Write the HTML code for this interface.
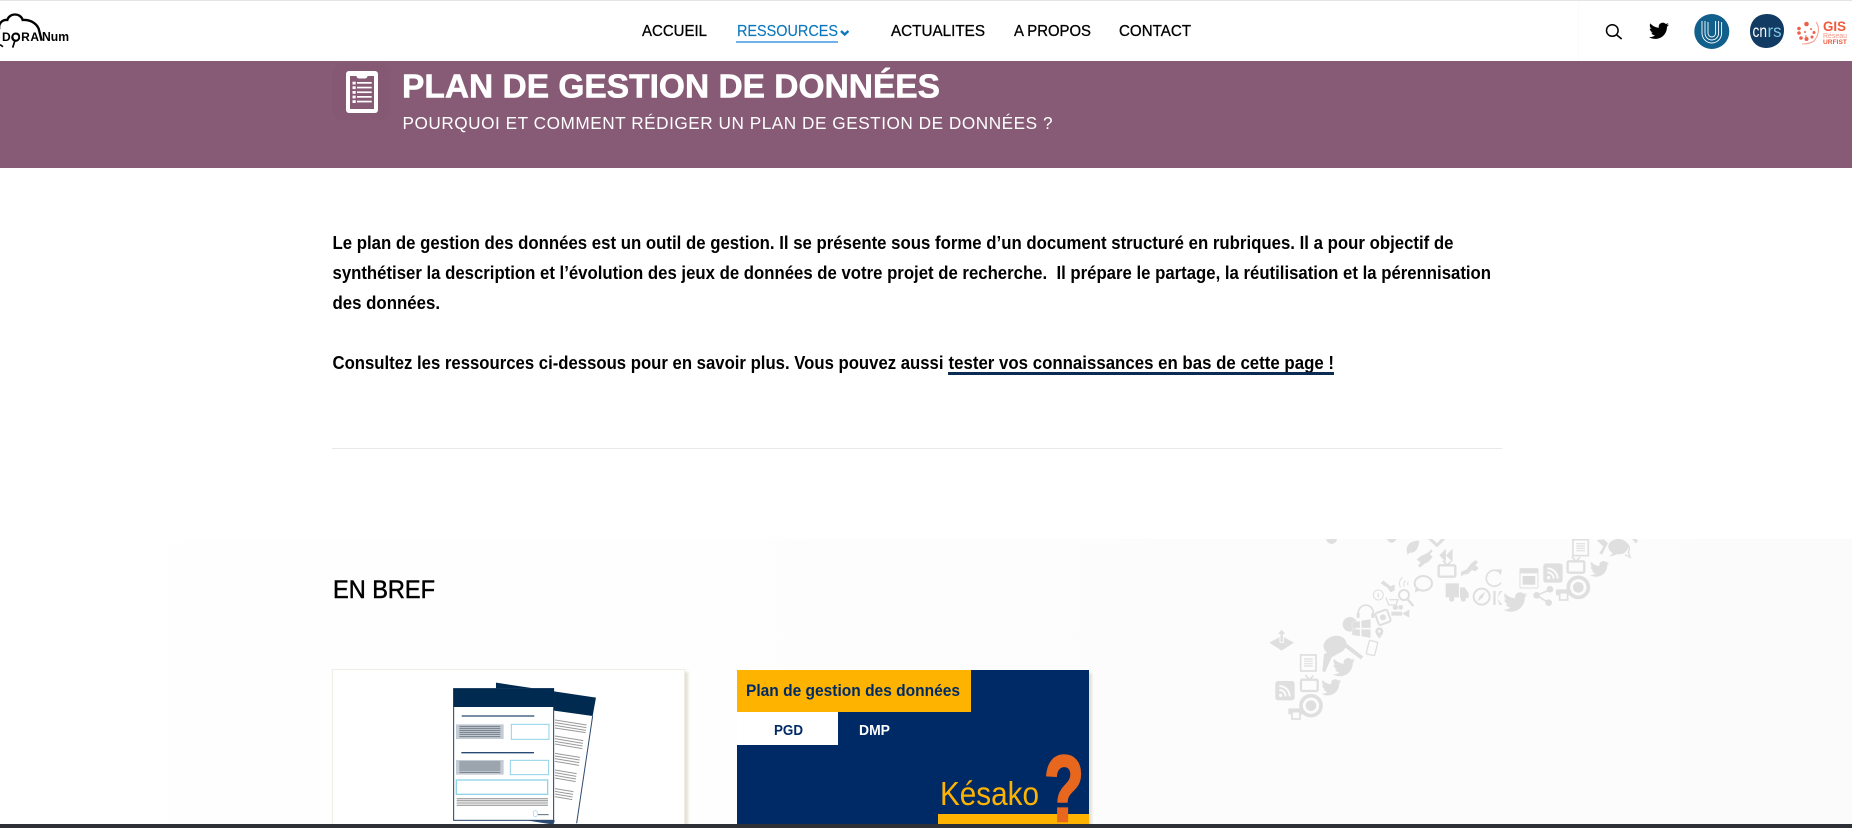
<!DOCTYPE html>
<html lang="fr"><head><meta charset="utf-8"><title>Plan de gestion de données</title>
<style>html,body{margin:0;padding:0;background:#fff;width:1852px;height:828px;overflow:hidden}svg{display:block}text{font-family:"Liberation Sans",sans-serif}</style></head>
<body>
<svg width="1852" height="828" viewBox="0 0 1852 828" xmlns="http://www.w3.org/2000/svg">
<defs>
<linearGradient id="bg" x1="0" y1="0" x2="1" y2="0"><stop offset="0" stop-color="#fff"/><stop offset=".25" stop-color="#fefefe"/><stop offset=".75" stop-color="#fcfcfc"/><stop offset="1" stop-color="#fbfbfb"/></linearGradient>
<filter id="sh" x="-5%" y="-5%" width="110%" height="110%"><feGaussianBlur stdDeviation="1.300"/></filter>
<path id="tw" d="M23.95 4.57a10 10 0 01-2.82.77 4.96 4.96 0 002.16-2.72c-.95.55-1.96.95-3.06 1.18a4.92 4.92 0 00-8.38 4.48C7.69 8.1 4.07 6.13 1.64 3.16a4.82 4.82 0 00-.66 2.47c0 1.71.87 3.21 2.19 4.1a4.9 4.9 0 01-2.23-.61v.06c0 2.39 1.7 4.38 3.95 4.83a5 5 0 01-2.21.08 4.94 4.94 0 004.6 3.42A9.87 9.87 0 010 19.54a13.94 13.94 0 007.55 2.21c9.05 0 14-7.5 14-13.98 0-.21 0-.42-.02-.63a9.94 9.94 0 002.46-2.55z"/>
<g id="rss"><rect width="58" height="58" rx="8" fill="#dfdfdf"/><circle cx="16" cy="43" r="5" fill="#fbfbfb"/><path d="M12 27a19 19 0 0 1 19 19M12 15a31 31 0 0 1 31 31" fill="none" stroke="#fbfbfb" stroke-width="6"/></g>
<g id="tv"><rect x="3" y="14" width="50" height="34" rx="4" fill="none" stroke="#dfdfdf" stroke-width="7"/><path d="M16 0l12 14L40 2" fill="none" stroke="#dfdfdf" stroke-width="5"/></g>
<g id="target"><circle r="30" fill="none" stroke="#dfdfdf" stroke-width="11"/><circle r="16" fill="#dfdfdf"/></g>
<g id="doc"><rect x="2" y="2" width="46" height="48" fill="none" stroke="#dfdfdf" stroke-width="5"/><path d="M12 14h26M12 21h26M12 28h26M12 35h26" stroke="#dfdfdf" stroke-width="3.500"/></g>
<g id="printer"><rect x="0" y="10" width="45" height="18" rx="3" fill="#dfdfdf"/><rect x="11" y="20" width="24" height="22" fill="#fbfbfb" stroke="#dfdfdf" stroke-width="5"/></g>
<clipPath id="secclip"><rect x="0" y="27" width="1260" height="600"/></clipPath>
</defs>

<!-- top rule and header -->
<rect width="1852" height="828" fill="#fff"/>
<rect width="1852" height="1" fill="#e4e4e4"/>
<rect x="1578" y="1" width="1" height="60" fill="#fbfbfb"/>

<!-- logo -->
<g transform="scale(.3333)">
<path d="M-2 88C-6 72 6 58 22 60C28 38 62 38 68 60C88 58 108 68 116 86L125 122" fill="none" stroke="#000" stroke-width="7"/>
<circle cx="47" cy="112" r="11" fill="#fff" stroke="#000" stroke-width="5"/>
<path d="M44 124L38 143M0 134L9 140" fill="none" stroke="#000" stroke-width="5"/>
</g>
<text x="2" y="41" font-size="12" font-weight="bold" fill="#000" textLength="37" lengthAdjust="spacing">DORA</text>
<text x="42" y="41" font-size="12.500" font-weight="bold" fill="#000" textLength="27" lengthAdjust="spacingAndGlyphs">Num</text>

<!-- nav -->
<g font-size="15.800" fill="#000" stroke="#000" stroke-width=".3">
<text x="642" y="36" textLength="65" lengthAdjust="spacingAndGlyphs">ACCUEIL</text>
<text x="891" y="36" textLength="94" lengthAdjust="spacingAndGlyphs">ACTUALITES</text>
<text x="1014" y="36" textLength="77" lengthAdjust="spacingAndGlyphs">A PROPOS</text>
<text x="1119" y="36" textLength="72" lengthAdjust="spacingAndGlyphs">CONTACT</text>
</g>
<text x="737" y="36" font-size="15.800" fill="#0b76bd" stroke="#0b76bd" stroke-width=".15" textLength="101" lengthAdjust="spacingAndGlyphs">RESSOURCES</text>
<rect x="736" y="41" width="102" height="2" fill="#6fb1ec"/>
<path d="M841 31l3.700 3.500L848.400 31" fill="none" stroke="#0b76bd" stroke-width="2.400"/>

<!-- right icons -->
<circle cx="1612.300" cy="30.500" r="5.800" fill="none" stroke="#000" stroke-width="1.500"/>
<path d="M1616.500 34.800L1621.700 39" stroke="#000" stroke-width="1.600"/>
<use href="#tw" transform="translate(1649 20.800) scale(.833)" fill="#000"/>
<circle cx="1711.800" cy="31.500" r="17.500" fill="#115f8b"/>
<g fill="none" stroke="#fff" stroke-width=".9">
<path d="M1702 21v12a9.800 10 0 0 0 19.600 0V22"/>
<path d="M1705 21v12a6.800 7 0 0 0 13.600 0V21"/>
<path d="M1708 22v11a3.800 4 0 0 0 7.600 0V21"/>
</g>
<path d="M1767 14c10 0 17 7 17 16 0 11-8 18-18 18-9 0-16-7-16-17 0-10 7-17 17-17z" fill="#113b62"/>
<text x="1752.500" y="37" font-size="17.500" fill="#fff" textLength="14.500" lengthAdjust="spacingAndGlyphs">cn</text>
<text x="1767.500" y="37" font-size="17.500" fill="#7fc8e4" textLength="14" lengthAdjust="spacingAndGlyphs">rs</text>
<g fill="#ef6048">
<circle cx="1806.500" cy="24" r="2.300"/><circle cx="1799" cy="28.500" r="1.800"/><circle cx="1799" cy="33" r="1.800"/><circle cx="1805" cy="32" r="1"/><circle cx="1811" cy="29" r="1"/><circle cx="1814" cy="32.500" r="1.500"/><circle cx="1801" cy="38" r="1.800"/><circle cx="1806.500" cy="39" r="2"/><circle cx="1812" cy="37" r="1.500"/><circle cx="1806" cy="36" r=".8"/>
</g>
<path d="M1816 22c4 5 3 13-2 19-3 2-8 3-12 3" fill="none" stroke="#f5a393" stroke-width="1.100"/>
<text x="1823" y="31" font-size="14" font-weight="bold" fill="#ee5a3c" textLength="23" lengthAdjust="spacingAndGlyphs">GIS</text>
<text x="1823" y="38" font-size="7" fill="#f29382" textLength="24" lengthAdjust="spacingAndGlyphs">Réseau</text>
<text x="1823" y="44" font-size="6.500" font-weight="bold" fill="#ee5a3c" textLength="24" lengthAdjust="spacingAndGlyphs">URFIST</text>

<!-- banner -->
<rect y="61" width="1852" height="107" fill="#875a75"/>
<rect x="332" y="63" width="59" height="57" rx="11" fill="#855873"/>
<rect x="346" y="71" width="32" height="42" rx="3" fill="#fff"/>
<rect x="350" y="76" width="24" height="33" fill="#875a75"/>
<path d="M356.500 71h11v5a2.500 2.500 0 0 1-2.500 2.500h-6a2.500 2.500 0 0 1-2.500-2.500z" fill="#fff"/>
<g fill="#fff">
<rect x="352.500" y="81.700" width="3.200" height="2.800"/><rect x="352.500" y="86.300" width="3.200" height="2.800"/><rect x="352.500" y="91" width="3.200" height="2.800"/><rect x="352.500" y="95.600" width="3.200" height="2.800"/><rect x="352.500" y="100.200" width="3.200" height="2.800"/>
<rect x="357" y="82" width="14.700" height="1.700"/><rect x="357" y="86.700" width="14.700" height="1.700"/><rect x="357" y="91.400" width="14.700" height="1.700"/><rect x="357" y="96" width="14.700" height="1.700"/><rect x="357" y="100.700" width="14.700" height="1.700"/>
</g>
<text x="402" y="97.500" font-size="33" font-weight="bold" fill="#fff" stroke="#fff" stroke-width=".6" textLength="538" lengthAdjust="spacingAndGlyphs">PLAN DE GESTION DE DONNÉES</text>
<text x="402.500" y="129" font-size="17.200" fill="#fff" textLength="650" lengthAdjust="spacing">POURQUOI ET COMMENT RÉDIGER UN PLAN DE GESTION DE DONNÉES ?</text>

<!-- intro text -->
<g font-size="18" font-weight="bold" fill="#000">
<text x="332.500" y="249" textLength="1121" lengthAdjust="spacingAndGlyphs">Le plan de gestion des données est un outil de gestion. Il se présente sous forme d’un document structuré en rubriques. Il a pour objectif de</text>
<text x="332.500" y="279" textLength="1158.500" lengthAdjust="spacingAndGlyphs" xml:space="preserve">synthétiser la description et l’évolution des jeux de données de votre projet de recherche.  Il prépare le partage, la réutilisation et la pérennisation</text>
<text x="332.500" y="309" textLength="107.500" lengthAdjust="spacingAndGlyphs">des données.</text>
<text x="332.500" y="369" textLength="611" lengthAdjust="spacingAndGlyphs">Consultez les ressources ci-dessous pour en savoir plus. Vous pouvez aussi</text>
<text x="948.500" y="369" textLength="385.500" lengthAdjust="spacingAndGlyphs">tester vos connaissances en bas de cette page !</text>
</g>
<rect x="948" y="372" width="386" height="3" fill="#0a2c52"/>
<rect x="332" y="448" width="1170" height="1" fill="#e8e8e8"/>

<!-- section background -->
<rect y="539" width="1852" height="285" fill="url(#bg)"/>

<!-- icon cluster -->
<g transform="translate(1250 530) scale(.3333)" clip-path="url(#secclip)" fill="#dfdfdf">
<path d="M58 338l37-20 37 20-37 24z"/><path d="M95 297l14 16h-9v24h-10v-24h-9z" stroke="#fbfbfb" stroke-width="3"/>
<use href="#rss" x="76" y="453"/>
<use href="#tv" x="150" y="435"/>
<use href="#doc" x="150" y="373"/>
<use href="#tw" transform="translate(214 442) scale(2.500)"/>
<use href="#target" x="183" y="527"/>
<use href="#printer" x="115" y="525"/>
<ellipse cx="255" cy="345" rx="35" ry="27" transform="rotate(-15 255 345)"/>
<path d="M270 325l70 55-8 8-72-55zM222 372l50-22 8 12-35 20-20 45-8-4z"/>
<use href="#tw" transform="translate(248 378) scale(2.800)"/>
<rect x="353" y="333" width="26" height="42" rx="4" fill="none" stroke="#dfdfdf" stroke-width="4" transform="rotate(14 366 354)"/>
<circle cx="300" cy="283" r="22"/>
<path d="M306 277l24-4v21h-24zM334 272l28-5v27h-28zM306 298h24v21l-24-4zM334 298h28v26l-28-5z" stroke="#fbfbfb" stroke-width="1"/>
<path d="M388 292a12 12 0 0 1 12 12c0 8-12 22-12 22s-12-14-12-22a12 12 0 0 1 12-12z"/><circle cx="388" cy="304" r="4" fill="#fbfbfb"/>
<rect x="380" y="243" width="38" height="38" rx="6" fill="none" stroke="#dfdfdf" stroke-width="6" transform="rotate(-20 399 262)"/><circle cx="399" cy="262" r="9"/>
<path d="M325 260v-12a22 22 0 0 1 45 0v12" fill="none" stroke="#dfdfdf" stroke-width="5"/><rect x="320" y="248" width="9" height="16" rx="3"/><rect x="364" y="248" width="9" height="16" rx="3"/>
<circle cx="385" cy="195" r="15" fill="none" stroke="#dfdfdf" stroke-width="3"/><rect x="383" y="190" width="4" height="12"/>
<path d="M408 203l8 22h22l6-16h-26" fill="none" stroke="#dfdfdf" stroke-width="4"/>
<path d="M424 245h32v6l22-12v24l-22-12v6h-32z"/><circle cx="436" cy="232" r="8"/><circle cx="452" cy="232" r="7"/>
<circle cx="462" cy="195" r="15" fill="none" stroke="#dfdfdf" stroke-width="6"/><path d="M472 207l18 21" stroke="#dfdfdf" stroke-width="7"/>
<path d="M452 172a22 22 0 0 1 6-30M463 170a14 14 0 0 1 4-18M474 165a7 7 0 0 1 2-9" fill="none" stroke="#dfdfdf" stroke-width="3"/>
<ellipse cx="520" cy="160" rx="26" ry="22" fill="#fbfbfb" stroke="#dfdfdf" stroke-width="6"/><path d="M498 172l-4 16 18-8z"/>
<path d="M392 160l8-9 22 18 12-6 0 18-12 6-10-14z"/>
<path d="M510 80l24-12 10-10 4 5-8 10 8 8-12 14-12 6-14 12-6-6 8-10-12-8z"/>
<path d="M470 60c0-18 14-28 38-28-2 26-14 38-28 36l-8 6z"/>
<path d="M535 22l26 24 30-30" fill="none" stroke="#dfdfdf" stroke-width="9"/>
<path d="M608 56v40l-20-20zM588 56v40l-20-20z"/>
<use href="#tv" x="563" y="92"/>
<path d="M632 132l18-8 12-16 14-12 8 6-8 10 10 8-10 10-10-4-12 12-14 2-6 6z" transform="translate(0 -6)"/>
<path d="M748 126a24 24 0 1 0 5 32" fill="none" stroke="#dfdfdf" stroke-width="5"/><path d="M740 118l16 0-4 18z"/>
<path d="M587 160h40v42h-40zM630 172h14l12 18v14h-26z"/><circle cx="605" cy="207" r="8"/><circle cx="640" cy="207" r="8"/>
<circle cx="695" cy="200" r="24" fill="none" stroke="#dfdfdf" stroke-width="6"/><path d="M682 215l8-18 16-12-8 18z"/>
<path d="M730 183h7v42h-7zM757 183l-16 21 16 21h-8l-8-21 8-21z"/>
<use href="#tw" transform="translate(760 180) scale(3)"/>
<rect x="810" y="116" width="54" height="58" rx="3" fill="none" stroke="#dfdfdf" stroke-width="3"/><rect x="810" y="116" width="54" height="14"/><path d="M818 138h38v26h-38z" fill="#cfcfcf" opacity=".7"/>
<use href="#rss" x="880" y="100"/>
<circle cx="900" cy="178" r="10"/><circle cx="860" cy="196" r="10"/><circle cx="896" cy="218" r="10"/><path d="M898 180l-38 16 36 22" fill="none" stroke="#dfdfdf" stroke-width="5"/>
<use href="#printer" x="918" y="168"/>
<use href="#target" x="985" y="172"/>
<use href="#tv" x="950" y="80"/>
<use href="#doc" x="967" y="27"/>
<use href="#tw" transform="translate(1020 88) scale(2.400)"/>
<ellipse cx="1105" cy="50" rx="30" ry="23"/><path d="M1090 68l-12 12 22-6z"/><path d="M1130 40a28 24 0 0 1 5 28l6 14-16-8" fill="none" stroke="#dfdfdf" stroke-width="4"/>
<path d="M1040 30l20 20-12 20 8 4 18-34-12-12zM1140 20l18 20 6-8-14-14z"/>
<circle cx="245" cy="26" r="16"/><circle cx="425" cy="24" r="14"/>
</g>

<text x="333" y="598" font-size="25" fill="#000" stroke="#000" stroke-width=".5" textLength="102" lengthAdjust="spacingAndGlyphs">EN BREF</text>

<!-- card 1 -->
<rect x="336" y="672" width="352" height="170" fill="#e4e2d4" filter="url(#sh)"/>
<rect x="332.500" y="669.500" width="352" height="170" fill="#fff" stroke="#efeee6"/>
<g transform="translate(320 660) scale(.3333)">
<path d="M528 68L828 113 770 490 640 490 600 300z" fill="#fff"/>
<path d="M528 68L828 113 818 168 702 152V85H528z" fill="#002a50"/>
<path d="M818 168L770 490" stroke="#2c4a70" stroke-width="3"/>
<g stroke="#9a9a9a" stroke-width="3">
<path d="M705 180l95 15M705 188l94 15M705 196l93 15M705 204l92 14"/>
<path d="M705 228l85 14M705 236l84 14M705 244l83 14M705 252l82 14"/>
<path d="M705 280l75 12M705 288l74 12M705 296l73 12M705 304l72 12"/>
<path d="M705 330l65 11M705 338l64 11M705 346l63 11M705 354l62 11"/>
<path d="M705 386l55 9M705 394l54 9M705 402l53 9M705 410l52 9"/>
</g>
<path d="M625 482l75 12 5-12z" fill="#2c4a70"/>
<rect x="401" y="86" width="300" height="395" fill="#fff" stroke="#1f3f66" stroke-width="3"/>
<rect x="400" y="85" width="302" height="56" fill="#002a50"/>
<path d="M425 168h218M424 278h218" stroke="#274a72" stroke-width="4"/>
<rect x="408" y="193" width="143" height="44" fill="#c3cbd4"/>
<rect x="408" y="300" width="143" height="44" fill="#c3cbd4"/>
<g stroke="#747d86" stroke-width="3">
<path d="M418 199h123M418 205h123M418 211h123M418 217h123M418 223h123M418 230h123"/>
<path d="M418 306h123M418 312h123M418 318h123M418 324h123M418 330h123M418 337h123"/>
</g>
<g fill="#fff" stroke="#8ed3e8" stroke-width="3">
<rect x="574" y="193" width="113" height="45"/>
<rect x="571" y="301" width="115" height="43"/>
<rect x="409" y="360" width="274" height="43" stroke-width="4"/>
</g>
<path d="M410 416h274M410 422h274M410 429h274M410 436h274" stroke="#a8a8a8" stroke-width="4"/>
<rect x="640" y="452" width="12" height="18" rx="6" fill="none" stroke="#8ed3e8" stroke-width="2"/>
<path d="M654 464h32" stroke="#5a6a7e" stroke-width="3"/>
</g>

<!-- card 2 -->
<rect x="741" y="673" width="351" height="170" fill="#e4e2d4" filter="url(#sh)"/>
<rect x="737" y="670" width="352" height="158" fill="#002a66"/>
<rect x="737" y="670" width="234" height="42" fill="#fdb300"/>
<text x="746" y="696" font-size="16.500" font-weight="bold" fill="#002a66" textLength="214" lengthAdjust="spacingAndGlyphs">Plan de gestion des données</text>
<rect x="737" y="712" width="101" height="33" fill="#fff"/>
<text x="774" y="735" font-size="14.500" font-weight="bold" fill="#002a66" textLength="29" lengthAdjust="spacingAndGlyphs">PGD</text>
<text x="859" y="735" font-size="14.500" font-weight="bold" fill="#fff" textLength="31" lengthAdjust="spacingAndGlyphs">DMP</text>
<text x="940" y="805" font-size="33" fill="#fdb300" textLength="99" lengthAdjust="spacingAndGlyphs">Késako</text>
<rect x="938" y="814" width="151" height="14" fill="#fdb300"/>
<text x="1044" y="821" font-size="94" font-weight="bold" fill="#e8671f" stroke="#e8671f" stroke-width="2.500" textLength="40" lengthAdjust="spacingAndGlyphs">?</text>

<!-- bottom bar -->
<rect y="824" width="1852" height="4" fill="#2e3038"/>
</svg>
</body></html>
